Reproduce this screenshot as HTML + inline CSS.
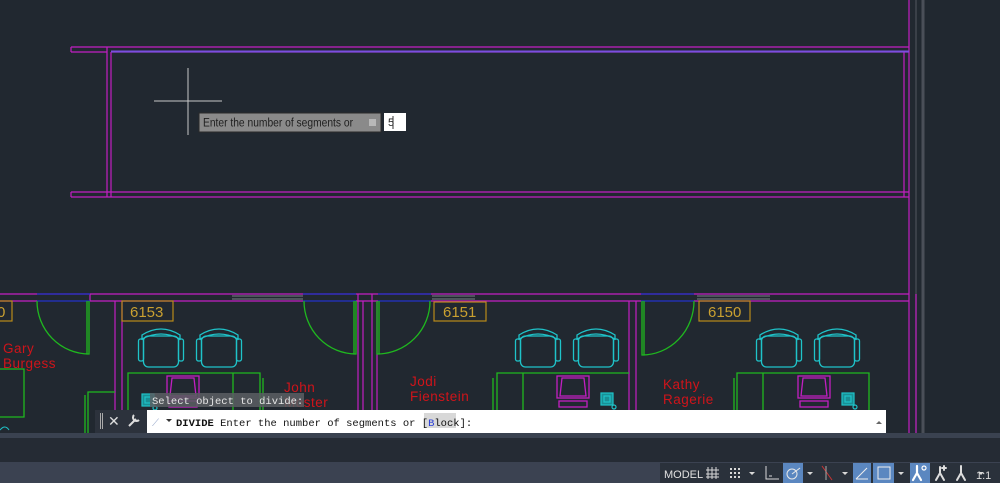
<!DOCTYPE html>
<html><head><meta charset="utf-8"><style>
html,body{margin:0;padding:0;background:#212830;width:1000px;height:483px;overflow:hidden;font-family:"Liberation Sans",sans-serif}
svg{position:absolute;left:0;top:0}
.mono{font-family:"Liberation Mono",monospace}
</style></head><body>
<svg width="1000" height="483" viewBox="0 0 1000 483">
<defs>
<g id="chair" fill="none" stroke="#1fc3c9" stroke-width="1.3">
<path d="M4 9 Q23 -3 42 9 L42 13 Q23 3 4 13Z"/>
<rect x="5.5" y="10" width="35" height="31" rx="5"/>
<rect x="0.5" y="13" width="5" height="22" rx="2"/>
<rect x="40.5" y="13" width="5" height="22" rx="2"/>
</g>
<g id="mon" fill="none" stroke="#c21fc2" stroke-width="1.3">
<rect x="0" y="0" width="32" height="22"/>
<path d="M5 2 L27 2 L29 20 L3 20Z"/>
<rect x="2" y="25" width="28" height="6"/>
</g>
<g id="phone" fill="none" stroke="#1fc3c9" stroke-width="1.2">
<rect x="0" y="0" width="12" height="12" fill="#1a8f95"/>
<rect x="3" y="3" width="6" height="6"/>
<circle cx="13" cy="14" r="2"/>
</g>
</defs>
<rect width="1000" height="483" fill="#212830"/>
<g fill="none" stroke="#c21fc2" stroke-width="1.2">
<path d="M71 47 H909 M71 52 H107 M71 47 V52 M111 52 H909"/>
<path d="M71 192 H909 M71 197 H909 M71 192 V197"/>
<path d="M107 47 V197 M111 52 V197 M904 52 V197 M909 0 V435"/>
</g>
<path d="M111 51.5 H909" stroke="#7a4fe0" stroke-width="2"/>
<path d="M916 0 V435" stroke="#4a4f58" stroke-width="1.2"/>
<path d="M923 0 V435" stroke="#4a4f58" stroke-width="3"/>
<path d="M188 68 V135 M154 101 H222" stroke="#c8c8c8" stroke-width="1"/>
<g fill="none" stroke="#c21fc2" stroke-width="1.2">
<path d="M0 294 H909 M0 301 H37 M90 301 H303 M356 301 H378 M431 301 H641 M694 301 H909"/>
<path d="M90 294 V301 M115 301 V433 M122 301 V433 M358 294 V433 M363 301 V433 M372 294 V433 M377 301 V433 M629 301 V433 M636 301 V433 M916 294 V433"/>
</g>
<g stroke="#2331c8" stroke-width="1.2"><path d="M37 294 H90 M37 301 H90 M303 294 H356 M303 301 H356 M378 294 H431 M378 301 H431 M641 294 H694 M641 301 H694"/></g>
<g stroke="#7a7f88" stroke-width="1"><path d="M232 296 H303 M232 299 H303 M432 296 H475 M432 299 H475 M697 296 H770 M697 299 H770"/></g>
<g fill="none" stroke="#1fb81f" stroke-width="1.3">
<path d="M89 301 V354 H87 V301 M37 301 A52 53 0 0 0 89 354"/>
<path d="M356 301 V354 H354 V301 M304 301 A52 53 0 0 0 356 354"/>
<path d="M377 301 V354 H379 V301 M430 301 A53 53 0 0 1 377 354"/>
<path d="M642 301 V355 H644 V301 M694 301 A52 54 0 0 1 642 355"/>
</g>
<g fill="none" stroke="#b98a1a" stroke-width="1.2">
<rect x="-5" y="301" width="17" height="20"/><rect x="122" y="301" width="51" height="20"/><rect x="434" y="302" width="52" height="19"/><rect x="699" y="301" width="51" height="20"/>
</g>
<g fill="#c9a030" font-size="15" font-family="Liberation Sans,sans-serif">
<text x="-3" y="317">0</text><text x="130" y="317">6153</text><text x="443" y="317">6151</text><text x="708" y="317">6150</text>
</g>
<use href="#chair" x="138" y="326"/><use href="#chair" x="196" y="326"/>
<use href="#chair" x="515" y="326"/><use href="#chair" x="573" y="326"/>
<use href="#chair" x="756" y="326"/><use href="#chair" x="814" y="326"/>
<g fill="none" stroke="#1fb81f" stroke-width="1.3">
<path d="M128 433 V373 H260 V433 M233 373 V433 M263 378 V433"/>
<path d="M497 433 V373 H629 M523 373 V433 M493 378 V433"/>
<path d="M737 433 V373 H869 V433 M763 373 V433 M734 378 V433"/>
<path d="M0 369 H24 V417 H0 M88 433 V392 H115 M85 395 V433"/>
</g>
<use href="#mon" x="167" y="376"/><use href="#mon" x="557" y="376"/><use href="#mon" x="798" y="376"/>
<use href="#phone" x="601" y="393"/><use href="#phone" x="842" y="393"/><use href="#phone" x="142" y="394"/>
<path d="M0 430 Q5 424 9 430" stroke="#1fc3c9" fill="none"/>
<g fill="#d0141a" font-size="13.5" font-family="Liberation Sans,sans-serif" letter-spacing="0.5">
<text x="3" y="353">Gary</text><text x="3" y="368">Burgess</text>
<text x="284" y="392">John</text><text x="284" y="407">Moster</text>
<text x="410" y="386">Jodi</text><text x="410" y="401">Fienstein</text>
<text x="663" y="389">Kathy</text><text x="663" y="404">Ragerie</text>
</g>
<rect x="199" y="113" width="182" height="19" fill="#8a8a8a" stroke="#2a2a2a"/>
<text x="203" y="126.5" font-size="11.5" fill="#1e1e1e" textLength="150" lengthAdjust="spacingAndGlyphs">Enter the number of segments or</text>
<rect x="369" y="119" width="7" height="7" fill="#b8b8b8"/>
<rect x="384" y="113" width="22" height="18" fill="#fff"/>
<text x="388" y="126" font-size="11" fill="#222">5</text>
<path d="M393 116 V129" stroke="#333"/>
<rect x="150" y="393" width="154" height="14" fill="#5a5e63" opacity="0.85"/>
<text class="mono" x="152" y="404" font-size="10.5" fill="#e6e6e6">Select object to divide:</text>
<rect x="95" y="410" width="52" height="23" fill="#2c323c"/>
<g fill="#aaa"><rect x="100" y="413" width="1" height="16"/><rect x="102" y="413" width="1" height="16"/></g>
<text x="108" y="426" font-size="14" fill="#ddd">✕</text>
<path d="M129 426 L136 419 M134 415 a3 3 0 1 0 5 5" stroke="#ddd" stroke-width="2" fill="none"/>
<rect x="147" y="410" width="739" height="23" fill="#fff"/>
<text x="152" y="426" font-size="10" fill="#9ac">⟋</text>
<path d="M166 419 h6 l-3 3z" fill="#333"/>
<rect x="424" y="413" width="32" height="15" fill="#d8d8d8"/>
<text class="mono" x="176" y="426" font-size="10.5" fill="#111"><tspan font-weight="bold">DIVIDE</tspan> Enter the number of segments or [<tspan fill="#2a3ed8">B</tspan>lock]:</text>
<path d="M876 424 l3 -3 l3 3z" fill="#666"/>
<rect x="0" y="433" width="1000" height="5" fill="#3a4250"/>
<rect x="0" y="438" width="1000" height="24" fill="#252b34"/>
<rect x="0" y="462" width="1000" height="21" fill="#3b4251"/>
<rect x="660" y="463" width="340" height="20" fill="#2a313b"/>
<text x="664" y="478" font-size="11" fill="#e0e0e0">MODEL</text>
<g stroke="#d8d8d8" fill="none" stroke-width="1">
<path d="M708 467 V479 M712 467 V479 M716 467 V479 M706 470 H719 M706 474 H719 M706 477 H719"/>
<path d="M766 466 V479 H779 M769 476 H772"/>
</g>
<g fill="#d8d8d8"><rect x="730" y="468" width="2" height="2"/><rect x="734" y="468" width="2" height="2"/><rect x="738" y="468" width="2" height="2"/><rect x="730" y="472" width="2" height="2"/><rect x="734" y="472" width="2" height="2"/><rect x="738" y="472" width="2" height="2"/><rect x="730" y="476" width="2" height="2"/><rect x="734" y="476" width="2" height="2"/><rect x="738" y="476" width="2" height="2"/>
<path d="M749 472 h6 l-3 3z M807 472 h6 l-3 3z M842 472 h6 l-3 3z M898 472 h6 l-3 3z M978 472 h6 l-3 3z"/></g>
<rect x="783" y="463" width="20" height="20" fill="#5b87c0"/>
<circle cx="792" cy="474" r="5" stroke="#e8e8e8" fill="none"/>
<path d="M792 474 L800 468" stroke="#e8e8e8"/>
<path d="M822 466 L832 480" stroke="#c33"/><path d="M826 466 V480" stroke="#aaa"/>
<rect x="853" y="463" width="18" height="20" fill="#5b87c0"/>
<path d="M856 479 H868 M856 479 L867 468" stroke="#eee"/>
<rect x="873" y="463" width="21" height="20" fill="#5b87c0"/>
<rect x="878" y="467" width="12" height="12" stroke="#eee" fill="none"/>
<rect x="910" y="463" width="20" height="20" fill="#5b87c0"/>
<g stroke="#fff" stroke-width="2.2" fill="none" stroke-linecap="round">
<path d="M917 466 V473 L913 480 M917 473 L921 480"/>
<circle cx="924" cy="468" r="2" stroke-width="1.2"/>
</g>
<g stroke="#ddd" stroke-width="2" fill="none" stroke-linecap="round">
<path d="M940 467 V473 L936 480 M940 473 L944 480 M944 466 v4 M942 468 h4"/>
<path d="M961 466 V473 L957 480 M961 473 L965 480"/>
</g>
<text x="976" y="479" font-size="11" fill="#ddd">1:1</text>
</svg>
</body></html>
